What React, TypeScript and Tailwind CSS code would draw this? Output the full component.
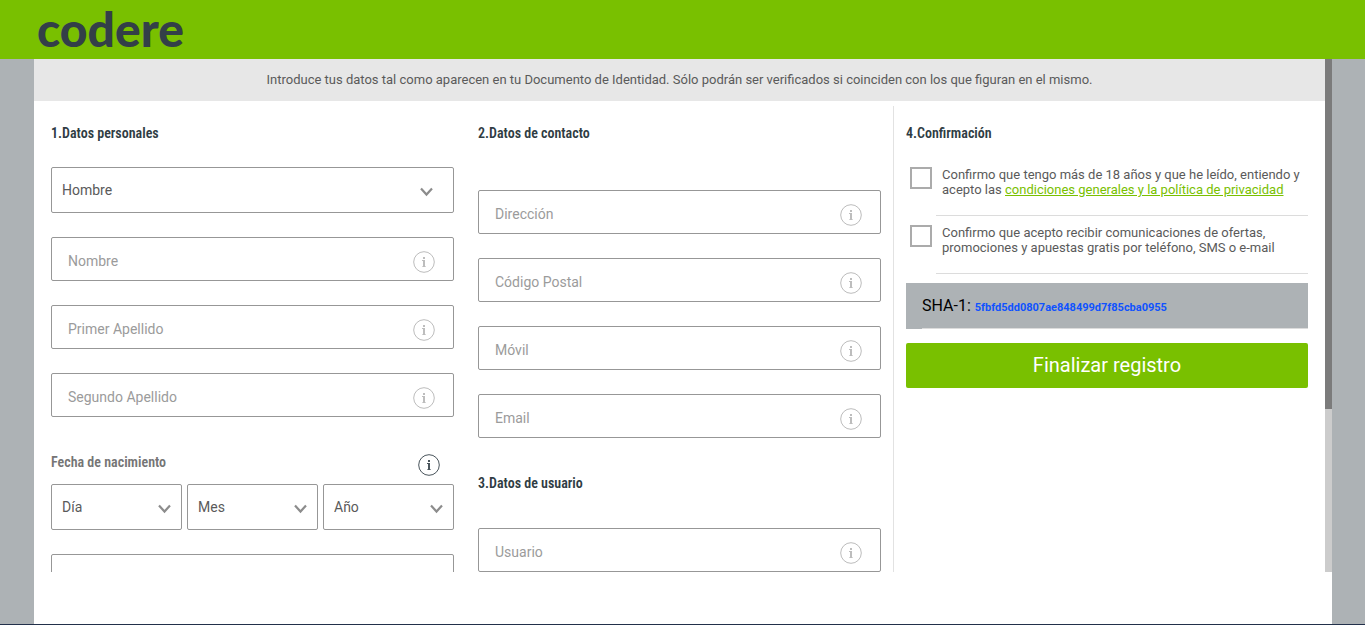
import { useId } from "react";
import clsx from "clsx";

const InfoIcon = () => (
  <svg width="22" height="22" viewBox="0 0 22 22" fill="none" aria-hidden="true">
    <circle cx="11" cy="11" r="10.3" stroke="currentColor" strokeWidth="1" />
    <rect x="10" y="6" width="2" height="2" fill="currentColor" />
    <path d="M9 9h3v7h-2v-6H9z" fill="currentColor" />
    <path d="M9 15.4h4v.6H9z" fill="currentColor" />
  </svg>
);

const Chevron = () => (
  <svg width="14" height="10" viewBox="0 0 14 10" fill="none" aria-hidden="true">
    <path d="M1 1.5l5.5 6 5.5-6" stroke="#8c8c8c" strokeWidth="2.2" />
  </svg>
);

const Heading = ({ children }: { children: string }) => (
  <h2 className="font-['Roboto_Condensed','Roboto',sans-serif] text-sm leading-5 font-semibold text-[#2f3c43]">
    {children}
  </h2>
);

const TextField = ({ label }: { label: string }) => (
  <div className="flex h-11 items-center rounded-xs border border-[#979797] pt-1 pr-[18px] pl-4">
    <input
      type="text"
      aria-label={label}
      placeholder={label}
      className="min-w-0 flex-1 bg-transparent text-sm text-[#5a5a5a] outline-none placeholder:text-[#9b9b9b]"
    />
    <button type="button" aria-label={`Información sobre ${label}`} className="mt-[2px] text-[#bdbdbd]">
      <InfoIcon />
    </button>
  </div>
);

const SelectField = ({ label, options, wide }: { label: string; options: string[]; wide?: boolean }) => (
  <div className="relative min-w-0 flex-1">
    <select
      aria-label={label}
      className={clsx(
        "w-full appearance-none rounded-xs border border-[#979797] bg-white pr-8 pl-[10px] text-sm text-[#5a5a5a] outline-none",
        options.length > 1 ? "h-[46px]" : "h-12",
      )}
    >
      {options.map((option) => (
        <option key={option}>{option}</option>
      ))}
    </select>
    <span className={clsx("pointer-events-none absolute top-5", wide ? "right-5" : "right-[10px]")}>
      <Chevron />
    </span>
  </div>
);

const Confirmation = ({ children }: { children: React.ReactNode }) => {
  const id = useId();
  return (
    <div className="flex h-[58px] gap-1 pl-1">
      <input
        id={id}
        type="checkbox"
        className="mt-[9px] size-[22px] shrink-0 appearance-none border-2 border-[#ababab] bg-white checked:bg-[#79c000]"
      />
      <label
        htmlFor={id}
        className="flex-1 border-b border-[#dcdcdc] pt-[9px] pl-[6px] text-[13px] leading-[15px] text-[#5a5a5a]"
      >
        {children}
      </label>
    </div>
  );
};

export default function App() {
  return (
    <div className="flex h-screen flex-col bg-[#adb2b5] font-['Roboto',sans-serif]">
      <header className="flex h-[59px] shrink-0 items-center bg-[#79c000] px-[37px] pb-[2px]">
        <a
          href="#"
          className="font-['Lato',sans-serif] text-5xl leading-[48px] font-black text-[#333f48]"
        >
          codere
        </a>
      </header>

      <div className="mr-[33px] ml-[34px] flex min-h-0 flex-1 flex-col bg-white pb-[52px]">
        <div className="flex min-h-0 flex-1">
          <main className="min-w-0 flex-1 overflow-x-hidden overflow-y-auto [scrollbar-width:none]">
            <p className="h-[42px] bg-[#e7e7e7] text-center text-[13px] leading-[42px] text-[#5a5a5a]">
              Introduce tus datos tal como aparecen en tu Documento de Identidad. Sólo podrán ser verificados si
              coinciden con los que figuran en el mismo.
            </p>

            <form className="grid grid-cols-3 px-[5px] pt-[5px]" onSubmit={(e) => e.preventDefault()}>
              <section className="flex flex-col gap-6 px-3 pt-[17px]">
                <Heading>1.Datos personales</Heading>
                <div className="flex">
                  <SelectField label="Sexo" options={["Hombre", "Mujer"]} wide />
                </div>
                <TextField label="Nombre" />
                <TextField label="Primer Apellido" />
                <TextField label="Segundo Apellido" />
                <fieldset className="pt-[11px]">
                  <div className="flex h-8 items-start justify-between pr-[14px]">
                    <span className="font-['Roboto_Condensed','Roboto',sans-serif] text-sm leading-5 font-semibold text-[#757575]">
                      Fecha de nacimiento
                    </span>
                    <button type="button" aria-label="Información sobre la fecha" className="pt-[2px] text-[#4a555c]">
                      <InfoIcon />
                    </button>
                  </div>
                  <div className="flex gap-[5px]">
                    <SelectField label="Día" options={["Día", "1", "2", "3"]} />
                    <SelectField label="Mes" options={["Mes", "1", "2", "3"]} />
                    <SelectField label="Año" options={["Año", "1980", "1990", "2000"]} />
                  </div>
                </fieldset>
                <div className="flex">
                  <SelectField label="Región" options={["Región"]} wide />
                </div>
              </section>

              <section className="flex flex-col gap-6 px-3 pt-[17px]">
                <div className="pb-[23px]">
                  <Heading>2.Datos de contacto</Heading>
                </div>
                <TextField label="Dirección" />
                <TextField label="Código Postal" />
                <TextField label="Móvil" />
                <TextField label="Email" />
                <div className="pt-[11px] pb-[11px]">
                  <Heading>3.Datos de usuario</Heading>
                </div>
                <TextField label="Usuario" />
              </section>

              <section className="border-l border-[#e2e2e2] px-3 pt-[17px]">
                <div className="pb-[15px]">
                  <Heading>4.Confirmación</Heading>
                </div>
                <Confirmation>
                  Confirmo que tengo más de 18 años y que he leído, entiendo y acepto las{" "}
                  <a href="#" className="text-[#79c000] underline">
                    condiciones generales y la política de privacidad
                  </a>
                </Confirmation>
                <Confirmation>
                  Confirmo que acepto recibir comunicaciones de ofertas, promociones y apuestas gratis por teléfono,
                  SMS o e-mail
                </Confirmation>
                <div className="mt-[9px] bg-[#adb2b5] pl-4">
                  <p className="h-[46px] border-b border-[#dcdcdc] text-base leading-[46px] text-black">
                    SHA-1: <span className="text-[11px] font-bold text-[#0f52ff]">5fbfd5dd0807ae848499d7f85cba0955</span>
                  </p>
                </div>
                <button
                  type="submit"
                  className="mt-[14px] h-[45px] w-full rounded-xs bg-[#79c000] pb-[2px] text-xl text-white"
                >
                  Finalizar registro
                </button>
              </section>
            </form>
          </main>

          <div className="w-[7px] shrink-0 bg-[#cccccc]">
            <div className="h-[68.2%] bg-[#7b7b7b]" />
          </div>
        </div>
      </div>

      <div className="h-px shrink-0 bg-[#22304a]" />
    </div>
  );
}
